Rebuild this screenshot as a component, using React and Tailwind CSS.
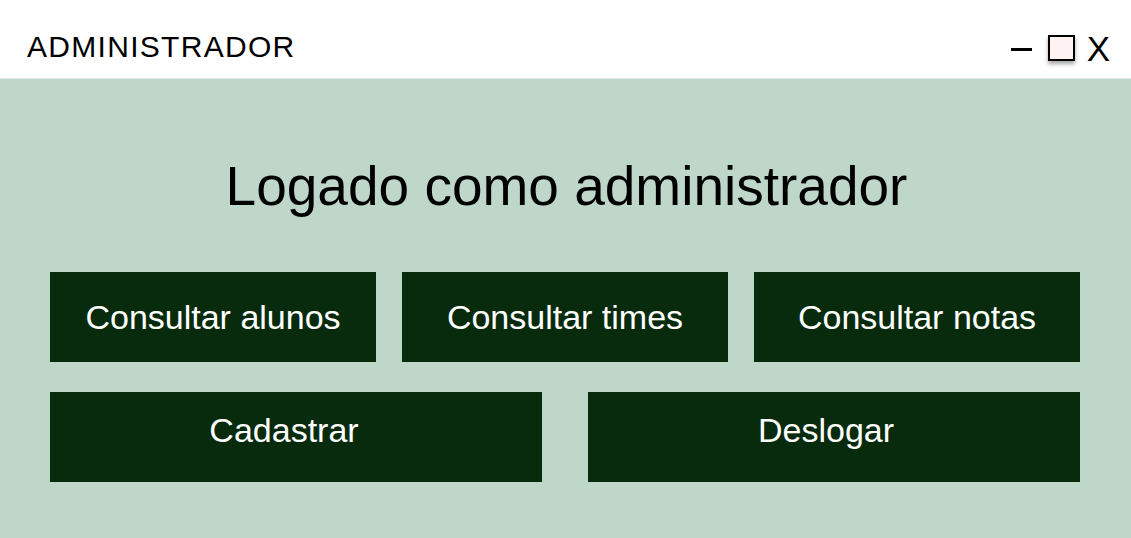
import React from "react";

const font = { fontFamily: '"Liberation Sans", Arial, sans-serif' };

const AdminPanel = () => {
  const topActions = ["Consultar alunos", "Consultar times", "Consultar notas"];

  return (
    <div className="w-[1131px] h-[538px] bg-white flex flex-col font-['Liberation_Sans',Arial,sans-serif]">
      {/* Window bar */}
      <div className="h-[79px] shrink-0 flex items-center justify-between pt-[16px] pl-[27px] pr-[21px] border-b border-gray-200">
        <span className="text-[30px] leading-none tracking-[1.3px] text-black">ADMINISTRADOR</span>
        <div className="flex items-center gap-[12px] pt-[2px]">
          <div className="w-[21px] h-[3px] bg-black mt-[2px]"></div>
          <div className="ml-[4px] w-[27px] h-[26px] bg-[#fff3f4] border-2 border-black shadow-[0_3px_4px_rgba(0,0,0,0.35)]"></div>
          <span className="text-[35px] leading-none text-black">X</span>
        </div>
      </div>

      {/* Content */}
      <div className="flex-1 bg-[#bfd7c9] pt-[80px] pl-[50px] pr-[51px]">
        <h1 className="text-center text-[55px] leading-none text-black pl-[3px]">Logado como administrador</h1>

        <div className="mt-[58px] grid grid-cols-3 gap-[26px]">
          {topActions.map((label) => (
            <button
              key={label}
              className="h-[90px] bg-[#072b0c] text-white text-[34px] leading-none flex items-center justify-center"
            >
              {label}
            </button>
          ))}
        </div>

        <div className="mt-[30px] grid grid-cols-2 gap-[46px]">
          <button className="h-[90px] bg-[#072b0c] text-white text-[34px] leading-none flex items-center justify-center pb-[14px] pr-[24px]">
            Cadastrar
          </button>
          <button className="h-[90px] bg-[#072b0c] text-white text-[34px] leading-none flex items-center justify-center pb-[14px] pr-[16px]">
            Deslogar
          </button>
        </div>
      </div>
    </div>
  );
};

export default function App() {
  return (
    <div style={font}>
      <AdminPanel />
    </div>
  );
}
